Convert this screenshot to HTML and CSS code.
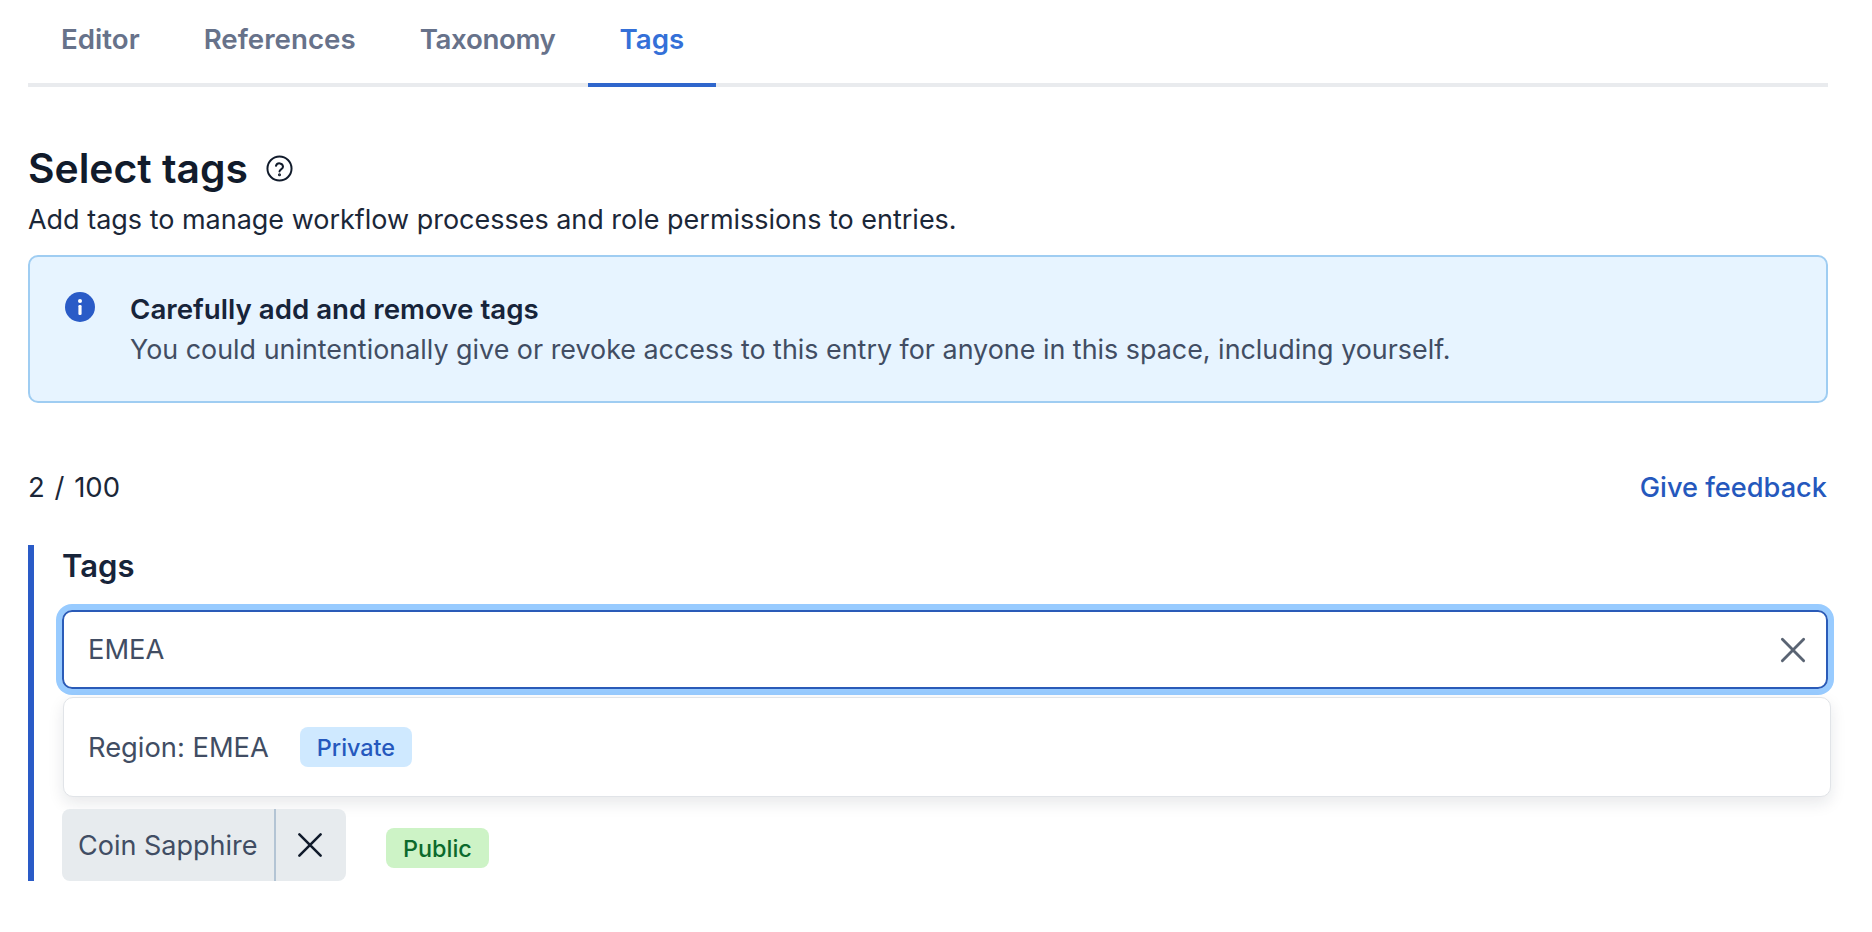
FILE: index.html
```html
<!DOCTYPE html>
<html lang="en">
<head>
<meta charset="utf-8">
<title>Tags</title>
<link rel="stylesheet" href="styles.css">
</head>
<body>
<main class="page">
  <nav class="tabs">
    <a class="tab">Editor</a>
    <a class="tab">References</a>
    <a class="tab tab-tight">Taxonomy</a>
    <a class="tab tab-active">Tags</a>
  </nav>

  <div class="heading">
    <h1 class="title">Select tags</h1>
    <svg class="help" viewBox="0 0 26 26" fill="none" stroke="#111b2b" stroke-width="1.9" stroke-linecap="round" stroke-linejoin="round">
      <circle cx="13" cy="13" r="11.6"/>
      <path d="M9.6 10.4a3.5 3.5 0 0 1 6.8 1c0 2.3-3.4 2.6-3.4 4.4"/>
      <circle cx="13" cy="19" r=".5" fill="#111b2b"/>
    </svg>
  </div>
  <p class="desc">Add tags to manage workflow processes and role permissions to entries.</p>

  <section class="note">
    <svg class="note-icon" viewBox="0 0 30 30">
      <circle cx="15" cy="15" r="15" fill="#2a5bc7"/>
      <circle cx="15" cy="9" r="2" fill="#fff"/>
      <rect x="13.4" y="13" width="3.2" height="10" rx="1.2" fill="#fff"/>
    </svg>
    <div class="note-body">
      <div class="note-title">Carefully add and remove tags</div>
      <div class="note-text">You could unintentionally give or revoke access to this entry for anyone in this space, including yourself.</div>
    </div>
  </section>

  <div class="meta">
    <span class="count">2 / 100</span>
    <a class="feedback">Give feedback</a>
  </div>

  <section class="field">
    <div class="field-label">Tags</div>
    <div class="input">
      <span class="input-value">EMEA</span>
      <svg class="input-clear" viewBox="0 0 22 22" fill="none" stroke="#5a6473" stroke-width="2.4" stroke-linecap="round">
        <path d="M2 2l18 18M20 2L2 20"/>
      </svg>
    </div>
    <div class="menu">
      <span class="menu-item">Region: EMEA</span>
      <span class="pill pill-private">Private</span>
    </div>
    <div class="selected">
      <div class="chip">
        <span class="chip-label">Coin Sapphire</span>
        <span class="chip-remove">
          <svg class="chip-x" viewBox="0 0 22 22" fill="none" stroke="#111b2b" stroke-width="2.2" stroke-linecap="round">
            <path d="M2 2l18 18M20 2L2 20"/>
          </svg>
        </span>
      </div>
      <span class="pill pill-public">Public</span>
    </div>
  </section>
</main>
</body>
</html>
```
FILE: styles.css
```css
* { box-sizing: border-box; }
html, body { margin: 0; padding: 0; background: #fff; }
body {
  font-family: Inter, "Liberation Sans", sans-serif;
  color: #111b2b;
  font-size: 27px;
  overflow: hidden;
}
.page { width: 1872px; padding: 0 44px 0 28px; }

.tabs {
  display: flex;
  height: 87px;
  padding-left: 1px;
  border-bottom: 4px solid #e9ebee;
}
.tab {
  padding: 0 32px;
  height: 87px;
  line-height: 79px;
  font-weight: 600;
  font-size: 27.7px;
  color: #67728a;
}
.tab-tight { letter-spacing: -.35px; }
.tab-active {
  color: #3470d8;
  border-bottom: 4px solid #2f66cc;
}

.heading {
  display: flex;
  align-items: center;
  margin-top: 57px;
  height: 48px;
}
.title {
  margin: 0;
  font-size: 40.8px;
  font-weight: 600;
  line-height: 48px;
  color: #111b2b;
}
.help { width: 27px; height: 27px; margin-left: 18px; }
.desc {
  margin: 11px 0 0;
  line-height: 34px;
  font-size: 26.97px;
  color: #1b2738;
}

.note {
  display: flex;
  margin-top: 18px;
  height: 148px;
  padding: 32px 35px;
  background: #e7f4ff;
  border: 2px solid #9fcdf2;
  border-radius: 10px;
}
.note-icon { width: 30px; height: 30px; flex: none; margin: 3px 35px 0 0; }
.note-title { font-size: 27.7px; font-weight: 600; line-height: 40px; color: #17243a; }
.note-text { font-size: 26.88px; line-height: 40px; color: #414d63; }

.meta {
  display: flex;
  justify-content: space-between;
  align-items: center;
  margin-top: 64px;
  height: 40px;
  padding-right: 1px;
}
.count { font-size: 27.5px; word-spacing: 2px; color: #1b2738; }
.feedback { font-size: 27.2px; color: #2558bd; font-weight: 500; }

.field {
  margin-top: 38px;
  border-left: 6px solid #2a5bc7;
  padding-left: 28px;
  height: 336px;
}
.field-label {
  height: 65px;
  line-height: 42px;
  font-size: 31px;
  font-weight: 600;
  color: #17243a;
}
.input {
  display: flex;
  justify-content: space-between;
  align-items: center;
  width: 1766px;
  height: 79px;
  padding: 0 20px 0 24px;
  border: 2px solid #2a5bb8;
  border-radius: 10px;
  box-shadow: 0 0 0 6px #98cbff;
  font-size: 27.3px;
  color: #414d63;
}
.input-clear { width: 26px; height: 26px; }

.menu {
  display: flex;
  align-items: center;
  width: 1768px;
  height: 100px;
  margin: 8px 0 0 1px;
  padding: 0 0 0 24px;
  background: #fff;
  border: 1px solid #e1e4e8;
  border-radius: 10px;
  box-shadow: 0 6px 16px rgba(20, 30, 50, .10);
  font-size: 27.3px;
  color: #414d63;
}
.menu-item { margin-right: 31px; }

.pill {
  display: inline-flex;
  align-items: center;
  height: 40px;
  padding: 0 17px;
  border-radius: 8px;
  font-size: 23.4px;
  font-weight: 500;
}
.pill-private { background: #cfe9ff; color: #2558bd; }
.pill-public { background: #cdf3c6; color: #0b6a2c; margin: 6px 0 0 40px; }

.selected {
  display: flex;
  align-items: center;
  margin-top: 12px;
}
.chip {
  display: flex;
  width: 284px;
  height: 72px;
  background: #e7ebee;
  border-radius: 8px;
  color: #414d63;
}
.chip-label {
  width: 214px;
  padding-left: 16px;
  line-height: 74px;
  white-space: nowrap;
  border-right: 2px solid #b3c4d4;
}
.chip-remove {
  flex: 1;
  display: flex;
  align-items: center;
  justify-content: center;
  padding-right: 2px;
}
.chip-x { width: 26px; height: 26px; }
```
